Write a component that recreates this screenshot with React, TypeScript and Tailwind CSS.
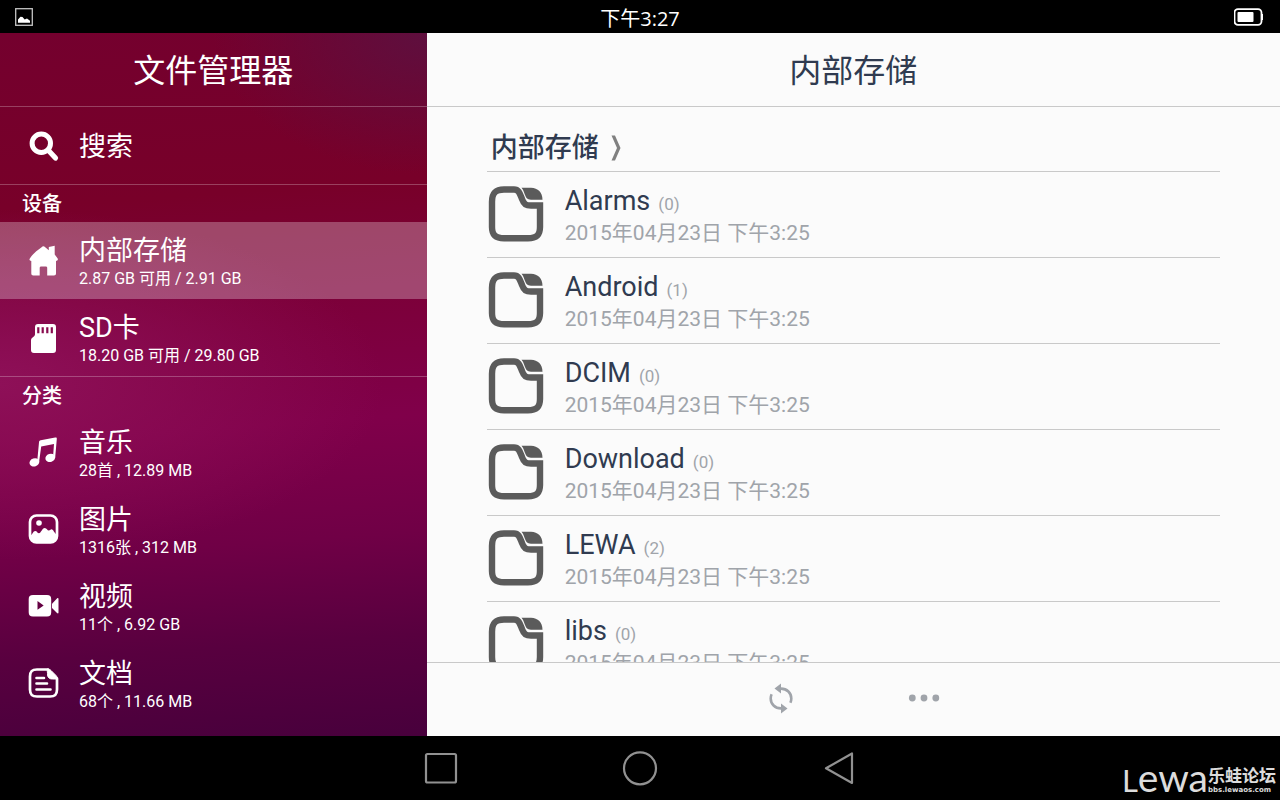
import type { ReactNode } from 'react';

interface SidebarEntry {
  id: string;
  title: string;
  detail: string;
  icon: ReactNode;
  active?: boolean;
}

interface Folder {
  name: string;
  count: number;
  modified: string;
}

const SearchIcon = () => (
  <svg viewBox="0 0 32 32" className="size-8" fill="none" stroke="currentColor" strokeLinecap="round">
    <circle cx="13.3" cy="12.3" r="9.2" strokeWidth="5" />
    <path d="M20.5 19.5 27.5 27" strokeWidth="5.2" />
  </svg>
);

const HomeIcon = () => (
  <svg viewBox="0 0 32 32" className="size-8" fill="currentColor">
    <path d="M13.6 2.2a2.6 2.6 0 0 1 3.6 0l3.6 3.1V1.9l5.9-1.2v8.7l2.8 3.8c.8 1.2.3 2.4-.9 2.6L28 16v12.5c0 1.3-.7 2-2 2h-6.8v-7.6c0-1-.5-1.5-1.5-1.5h-4.5c-1 0-1.5.5-1.5 1.5v7.6H5.3c-1.3 0-2-.7-2-2V16l-.8-.2c-1.2-.4-1.4-1.5-.5-2.6C4 9.5 9.5 5 13.6 2.2Z" />
  </svg>
);

const SdCardIcon = () => (
  <svg viewBox="0 0 32 32" className="size-8" fill="currentColor">
    <path
      fillRule="evenodd"
      d="M10 2h15c2 0 3 1 3 3v23c0 2-1 3-3 3H6c-2 0-3-1-3-3V18.5c0-1.2.4-2 1.3-2.8l1.5-1.3c.9-.8 1.2-1.4 1.2-2.5V5c0-2 1-3 3-3ZM9.2 5.3v6h2.2v-6Zm4.4 0v6h2.2v-6Zm4.6 0v6h2.2v-6Zm4.5 0v6h2.2v-6Z"
    />
  </svg>
);

const MusicIcon = () => (
  <svg viewBox="0 0 32 32" className="size-8" fill="currentColor">
    <path d="M11 5.3c0-1.3.6-1.9 1.7-2.1L27.2.5c1.2-.2 1.7.3 1.6 1.4L27.2 20.5h-2.2L26 7 13.2 9.4 11 25.5H9.1Z" />
    <ellipse cx="6.4" cy="25.4" rx="5" ry="4" transform="rotate(-18 6.4 25.4)" />
    <ellipse cx="22.3" cy="20.9" rx="5" ry="4" transform="rotate(-18 22.3 20.9)" />
  </svg>
);

const PictureIcon = () => (
  <svg viewBox="0 0 32 32" className="size-8" fill="currentColor">
    <rect x="2" y="1.5" width="27" height="27" rx="6.5" fill="none" stroke="currentColor" strokeWidth="2.7" />
    <circle cx="11" cy="9" r="2.8" />
    <path d="M2.5 21.5C4.5 20.5 5 17 7.3 17c1.7 0 2.2 2.3 3.7 2.3 2 0 3-5.3 5.8-5.3 2 0 2.5 2.6 4 2.6 1.2 0 1.6-1.3 2.7-1.3 2 0 2.5 4 5.5 5.2v2c0 4-2 6-6 6H8c-4 0-5.5-2-5.5-7Z" />
  </svg>
);

const VideoIcon = () => (
  <svg viewBox="0 0 32 32" className="size-8" fill="currentColor">
    <path
      fillRule="evenodd"
      d="M5 4h14c3 0 4.2 1.3 4.2 4.2v13c0 3-1.2 4.3-4.2 4.3H5c-3 0-4.3-1.3-4.3-4.3v-13C.7 5.3 2 4 5 4Zm4.5 6v8.8l6.2-4.4Z"
    />
    <path d="M24 12.7 29 7.5c.8-.7 1.5-.5 1.5.5v13.5c0 1-.7 1.2-1.5.5L24 17Z" />
  </svg>
);

const DocumentIcon = () => (
  <svg viewBox="0 0 32 32" className="size-8" fill="none" stroke="currentColor" strokeWidth="2.7" strokeLinecap="round">
    <path d="M20 1.5H9C4 1.5 2 3.5 2 8.5v13c0 5 2 7 7 7h13c5 0 7-2 7-7V10.5" />
    <path d="M19.5 1c1.5 0 2.5.5 3.5 1.5l4.5 4.5c1.3 1.3 2 2.5 2 4h-5c-3.5 0-5-1.5-5-5Z" fill="currentColor" strokeWidth="1" />
    <path d="M8.5 10H16M8.5 15.5H19M8.5 21.5H22.5" strokeWidth="2.6" />
  </svg>
);

const FolderIcon = () => (
  <svg viewBox="0 0 56 56" className="size-14 shrink-0 text-[#5b5b5b]">
    <path
      d="M16 3.5H26C31 3.5 32 8 34 13 36 18.5 38 19.5 43 19.5H52V41C52 49 49 52.3 40 52.3H16C7.5 52.3 4 49 4 41V16C4 7 7.5 3.5 16 3.5Z"
      fill="none"
      stroke="currentColor"
      strokeWidth="6.4"
    />
    <path d="M33.5 1.7H43C50 2 54.5 6 54.5 13.7H43C39 13.7 38 11.5 36.8 8.5 35.7 5.5 35.3 3.7 33.5 1.7Z" fill="currentColor" />
  </svg>
);

const RefreshIcon = () => (
  <svg viewBox="0 0 28 32" className="h-8 w-7" fill="none" stroke="currentColor" strokeWidth="2.6">
    <path d="M13 6.6h1C20 6.6 24.3 11 24.3 16.5c0 1.8-.3 3-.9 4.3" />
    <path d="M15 26.4h-1C8 26.4 3.7 22 3.7 16.5c0-1.8.3-3 .9-4.3" />
    <path d="M14 1.5v10L7.5 6.6Z" fill="currentColor" stroke="none" />
    <path d="M14 21.5v10l6.5-5.1Z" fill="currentColor" stroke="none" />
  </svg>
);

const devices: SidebarEntry[] = [
  { id: 'internal', title: '内部存储', detail: '2.87 GB 可用 / 2.91 GB', icon: <HomeIcon />, active: true },
  { id: 'sd', title: 'SD卡', detail: '18.20 GB 可用 / 29.80 GB', icon: <SdCardIcon /> },
];

const categories: SidebarEntry[] = [
  { id: 'music', title: '音乐', detail: '28首 , 12.89 MB', icon: <MusicIcon /> },
  { id: 'pictures', title: '图片', detail: '1316张 , 312 MB', icon: <PictureIcon /> },
  { id: 'videos', title: '视频', detail: '11个 , 6.92 GB', icon: <VideoIcon /> },
  { id: 'documents', title: '文档', detail: '68个 , 11.66 MB', icon: <DocumentIcon /> },
];

const folders: Folder[] = [
  { name: 'Alarms', count: 0, modified: '2015年04月23日 下午3:25' },
  { name: 'Android', count: 1, modified: '2015年04月23日 下午3:25' },
  { name: 'DCIM', count: 0, modified: '2015年04月23日 下午3:25' },
  { name: 'Download', count: 0, modified: '2015年04月23日 下午3:25' },
  { name: 'LEWA', count: 2, modified: '2015年04月23日 下午3:25' },
  { name: 'libs', count: 0, modified: '2015年04月23日 下午3:25' },
];

function SidebarRow({ entry }: { entry: SidebarEntry }) {
  return (
    <li>
      <button
        type="button"
        className={`flex h-[77px] w-full items-center gap-[19px] pl-7 text-left ${
          entry.active ? 'bg-white/28' : ''
        }`}
      >
        {entry.icon}
        <span className="flex flex-col pt-[5px]">
          <span className="text-[27px] leading-8">{entry.title}</span>
          <span className="text-base leading-6">{entry.detail}</span>
        </span>
      </button>
    </li>
  );
}

function SectionTitle({ children }: { children: ReactNode }) {
  return <h2 className="flex h-[37px] items-center pl-[22px] text-[20px] font-medium">{children}</h2>;
}

function StatusBar() {
  return (
    <header className="grid h-[33px] shrink-0 grid-cols-3 items-center bg-black px-[15px] text-white">
      <svg viewBox="0 0 18 18" className="size-[18px]">
        <rect x="0.7" y="0.7" width="16.6" height="16.6" fill="none" stroke="#c4c4c4" strokeWidth="1.3" />
        <path d="M3 14.8v-3.3l2.5-2.8 2 .2 2.2 2.5 2.3-1 3 2.4v2Z" fill="#fff" />
      </svg>
      <time className="pt-1 text-center font-['Open_Sans','Noto_Sans_CJK_SC',sans-serif] text-[20px] leading-7">下午3:27</time>
      <svg viewBox="0 0 31 18" className="h-[18px] w-[31px] justify-self-end">
        <rect x="-0.5" y="1.2" width="27" height="15.6" rx="3.5" fill="none" stroke="#fff" strokeWidth="1.8" className="translate-x-px" />
        <rect x="3.5" y="4" width="16" height="10" rx="1" fill="#fff" />
        <path d="M27.5 6h1.5v6h-1.5Z" fill="#fff" />
      </svg>
    </header>
  );
}

function Sidebar() {
  return (
    <aside className="w-1/3 shrink-0 overflow-hidden bg-[radial-gradient(50%_20%_at_100%_0%,#5e0f3e_0%,#5e0f3e00_100%),radial-gradient(90%_25%_at_0%_50%,#8e1058_0%,#8e105800_100%),linear-gradient(176deg,#74002e_0%,#780029_24%,#7c0038_38%,#80004a_56%,#700046_72%,#58003f_86%,#48003c_100%)] text-white">
      <h1 className="flex h-[74px] items-center justify-center border-b border-white/25 pt-0.5 text-[32px]">文件管理器</h1>
      <button
        type="button"
        className="flex h-[78px] w-full items-center gap-[19px] border-b border-white/25 pt-0.5 pl-7 text-left text-[27px]"
      >
        <SearchIcon />
        <span className="pt-0.5">搜索</span>
      </button>
      <SectionTitle>设备</SectionTitle>
      <ul className="border-b border-white/25">
        {devices.map((entry) => (
          <SidebarRow key={entry.id} entry={entry} />
        ))}
      </ul>
      <SectionTitle>分类</SectionTitle>
      <ul>
        {categories.map((entry) => (
          <SidebarRow key={entry.id} entry={entry} />
        ))}
      </ul>
    </aside>
  );
}

function FolderRow({ folder }: { folder: Folder }) {
  return (
    <li className="border-b border-[#c9c9c9]">
      <button type="button" className="flex h-[85px] w-full items-center gap-[21px] pb-0.5 pl-px text-left">
        <FolderIcon />
        <span className="flex flex-col pt-2">
          <span className="flex items-baseline gap-2 text-[27px] leading-7 text-[#303b50]">
            {folder.name}
            <span className="text-[17px] text-[#a0a4aa]">({folder.count})</span>
          </span>
          <span className="text-[21px] leading-[30px] text-[#a0a4aa]">{folder.modified}</span>
        </span>
      </button>
    </li>
  );
}

function FileBrowser() {
  return (
    <main className="flex min-w-0 flex-1 flex-col bg-[#fbfbfb] text-[#303b50]">
      <h1 className="flex h-[74px] shrink-0 items-center justify-center border-b border-[#c9c9c9] pt-0.5 text-[32px]">
        内部存储
      </h1>
      <div className="min-h-0 flex-1 overflow-hidden px-[60px]">
        <nav className="flex h-[65px] items-center gap-3 border-b border-[#c9c9c9] pt-[18px] pl-1">
          <a href="#internal" className="text-[27px] leading-8 font-medium">
            内部存储
          </a>
          <svg viewBox="0 0 10 26" className="h-[26px] w-[10px] text-[#808080]" fill="currentColor">
            <path d="M0.5 0.5H4L9.5 13 4 25.5H0.5L6 13Z" />
          </svg>
        </nav>
        <ul>
          {folders.map((folder) => (
            <FolderRow key={folder.name} folder={folder} />
          ))}
        </ul>
      </div>
      <footer className="flex h-[74px] shrink-0 items-center justify-center gap-[113px] border-t border-[#c9c9c9] pb-[3px] text-[#a0a4aa]">
        <button type="button" aria-label="刷新">
          <RefreshIcon />
        </button>
        <button type="button" aria-label="更多">
          <svg viewBox="0 0 32 8" className="h-2 w-8" fill="currentColor">
            <circle cx="4.3" cy="4" r="3.4" />
            <circle cx="16" cy="4" r="3.4" />
            <circle cx="27.8" cy="4" r="3.4" />
          </svg>
        </button>
      </footer>
    </main>
  );
}

function NavigationBar() {
  return (
    <footer className="relative flex h-16 shrink-0 items-center justify-center gap-[163px] bg-black text-[#919191]">
      <button type="button" aria-label="最近任务">
        <svg viewBox="0 0 36 36" className="size-9" fill="none" stroke="currentColor" strokeWidth="2.2">
          <rect x="3" y="4" width="30" height="28.5" rx="1.5" />
        </svg>
      </button>
      <button type="button" aria-label="主屏幕">
        <svg viewBox="0 0 36 36" className="size-9" fill="none" stroke="currentColor" strokeWidth="2.2">
          <circle cx="18" cy="18.3" r="16" />
        </svg>
      </button>
      <button type="button" aria-label="返回">
        <svg viewBox="0 0 36 36" className="size-9" fill="none" stroke="currentColor" strokeWidth="2.2" strokeLinejoin="round">
          <path d="M31 3.5v29.5L5 18.3Z" />
        </svg>
      </button>
      <div className="absolute right-1 bottom-0 flex items-end text-[#dcdcdc]">
        <span className="flex items-baseline font-['Lato',sans-serif] text-[39px] leading-10">
          <span className="text-[31px]">L</span>
          ewa
        </span>
        <span className="flex flex-col pb-1.5">
          <span className="text-[17px] leading-5 font-bold">乐蛙论坛</span>
          <span className="font-['DejaVu_Sans',sans-serif] text-[7px] leading-2 font-bold">bbs.lewaos.com</span>
        </span>
      </div>
    </footer>
  );
}

export default function App() {
  return (
    <div className="flex h-screen flex-col overflow-hidden font-['Roboto','Noto_Sans_CJK_SC',sans-serif]">
      <StatusBar />
      <div className="flex min-h-0 flex-1">
        <Sidebar />
        <FileBrowser />
      </div>
      <NavigationBar />
    </div>
  );
}
